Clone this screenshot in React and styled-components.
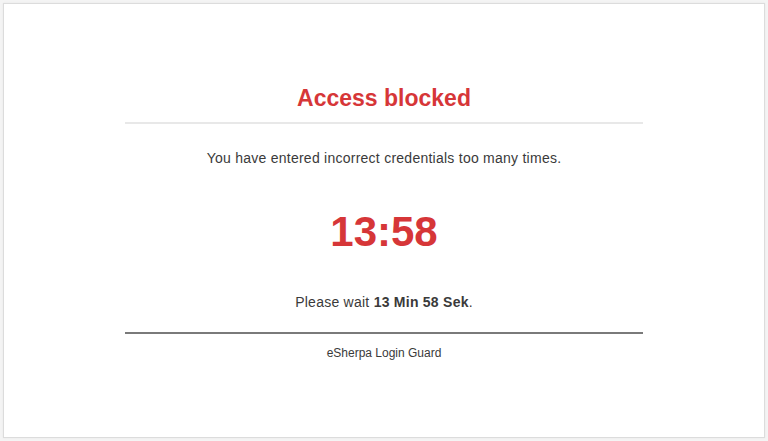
import React from "react";
import styled, { createGlobalStyle } from "styled-components";

const Global = createGlobalStyle`
  html, body {
    margin: 0;
    padding: 0;
    background: #f4f4f4;
  }
`;

const Frame = styled.div`
  box-sizing: border-box;
  margin: 3px;
  height: 435px;
  background: #fff;
  border: 1px solid #dcdcdc;
  box-shadow: 0 0 2px rgba(0, 0, 0, 0.06);
  font-family: "Liberation Sans", Arial, sans-serif;
  color: #3a3a3a;
`;

const Panel = styled.div`
  width: 518px;
  margin: 0 auto;
  padding-top: 80px;
  display: flex;
  flex-direction: column;
  align-items: center;
  text-align: center;
`;

const Title = styled.h1`
  margin: 0;
  font-size: 23px;
  line-height: 28px;
  font-weight: 700;
  color: #d63638;
`;

const Rule = styled.hr`
  align-self: stretch;
  margin: ${(p) => p.$gap};
  border: 0;
  height: 2px;
  background: ${(p) => p.$color};
`;

const Message = styled.p`
  margin: 0;
  font-size: 14px;
  line-height: 20px;
  letter-spacing: 0.25px;
`;

const Timer = styled.div`
  margin: 39px 0 35px;
  font-size: 42px;
  line-height: 50px;
  font-weight: 700;
  color: #d63638;
`;

const Footer = styled.div`
  font-size: 12px;
  line-height: 16px;
  color: #3a3a3a;
`;

export default function App() {
  return (
    <>
      <Global />
      <Frame>
        <Panel>
          <Title>Access blocked</Title>
          <Rule $gap="10px 0 24px" $color="#e8e8e8" />
          <Message>You have entered incorrect credentials too many times.</Message>
          <Timer>13:58</Timer>
          <Message>
            Please wait <b>13 Min 58 Sek</b>.
          </Message>
          <Rule $gap="20px 0 11px" $color="#7a7a7a" />
          <Footer>eSherpa Login Guard</Footer>
        </Panel>
      </Frame>
    </>
  );
}
